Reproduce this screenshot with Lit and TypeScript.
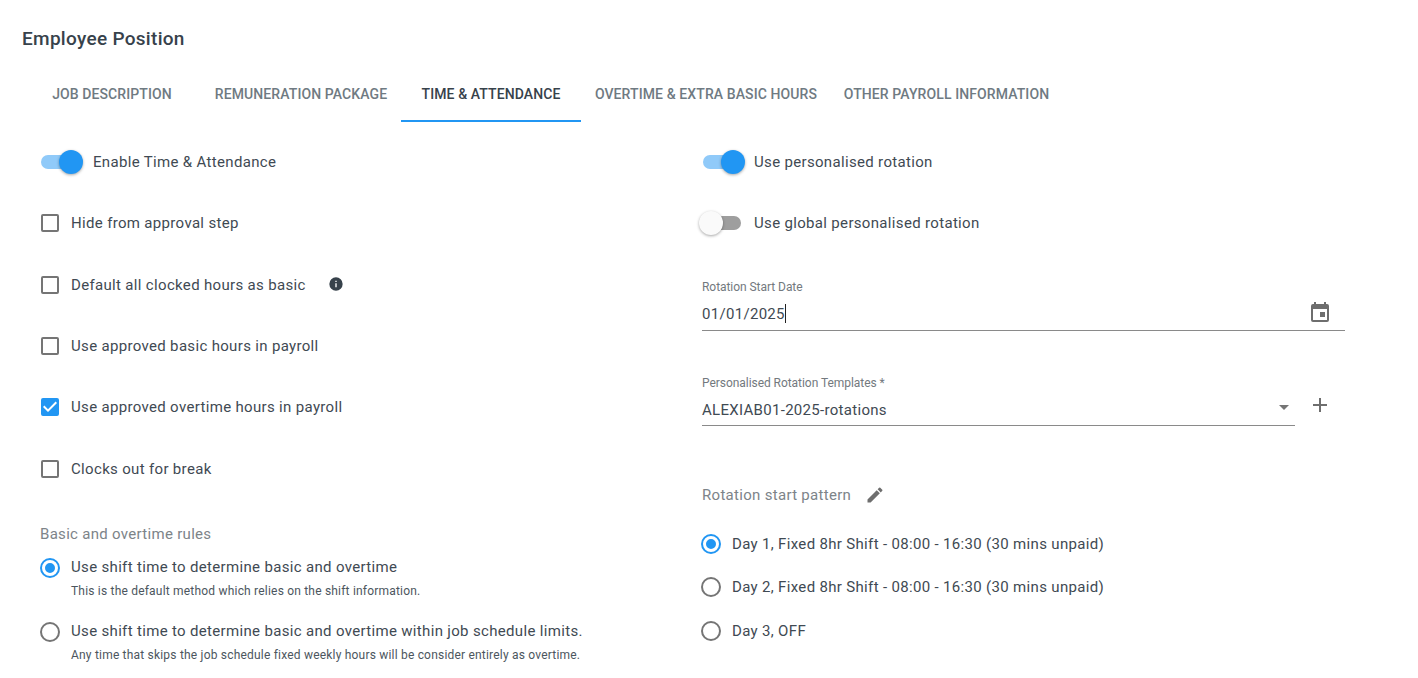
import { LitElement, html, css, svg } from "lit";
import { customElement } from "lit/decorators.js";

const icon = (d: string, cls: string) => html`<svg class=${cls} viewBox="0 0 24 24">${svg`<path d=${d}></path>`}</svg>`;
const CAL = "M19 4h-1V2h-2v2H8V2H6v2H5a2 2 0 0 0-2 2v14a2 2 0 0 0 2 2h14a2 2 0 0 0 2-2V6a2 2 0 0 0-2-2zm0 16H5V9h14v11zm-7-8h5v5h-5z";
const PLUS = "M19 13h-6v6h-2v-6H5v-2h6V5h2v6h6v2z";
const PEN = "M3 17.25V21h3.75L17.81 9.94l-3.75-3.75L3 17.25zM20.71 7.04a1 1 0 0 0 0-1.41l-2.34-2.34a1 1 0 0 0-1.41 0l-1.83 1.83 3.75 3.75 1.83-1.83z";
const INFO = "M12 2a10 10 0 1 0 0 20 10 10 0 0 0 0-20zm1 15h-2v-6h2v6zm0-8h-2V7h2v2z";
const CHECK = "M19 3H5a2 2 0 0 0-2 2v14a2 2 0 0 0 2 2h14a2 2 0 0 0 2-2V5a2 2 0 0 0-2-2zm-9 14l-5-5 1.41-1.41L10 14.17l7.59-7.59L19 8l-9 9z";
const BOX = "M19 5v14H5V5h14m0-2H5a2 2 0 0 0-2 2v14a2 2 0 0 0 2 2h14a2 2 0 0 0 2-2V5a2 2 0 0 0-2-2z";
const RADIO_ON = "M12 7a5 5 0 1 0 0 10 5 5 0 0 0 0-10zm0-5a10 10 0 1 0 0 20 10 10 0 0 0 0-20zm0 18a8 8 0 1 1 0-16 8 8 0 0 1 0 16z";
const RADIO_OFF = "M12 2a10 10 0 1 0 0 20 10 10 0 0 0 0-20zm0 18a8 8 0 1 1 0-16 8 8 0 0 1 0 16z";

@customElement("app-root")
export class AppRoot extends LitElement {
  static styles = css`
    :host { display: block; width: 1418px; height: 678px; overflow: hidden; background: #fff; font-family: Roboto, sans-serif; color: #3f4a53; }
    * { box-sizing: border-box; }
    h1 { margin: 0; padding: 28px 0 0 22px; height: 58px; font-size: 19px; line-height: 21px; font-weight: 500; color: #37424b; letter-spacing: 0.3px; }
    .tabs { display: flex; height: 64px; padding-left: 30px; }
    .tab { height: 64px; display: flex; align-items: center; justify-content: center; font-size: 14px; font-weight: 500; letter-spacing: 0.1px; color: #6f7a82; padding-top: 8px; white-space: nowrap; }
    .tab.active { color: #37424b; border-bottom: 2px solid #2196f3; padding-top: 10px; padding-bottom: 0; }
    .t1 { width: 164px; }
    .t2 { width: 200px; margin-left: 7px; }
    .t3 { width: 180px; }
    .t4 { width: 250px; }
    .t5 { width: 231px; }
    .columns { display: grid; grid-template-columns: 702px 643px; padding-top: 7.5px; }
    .left { padding-left: 40px; }
    .row { height: 61.4px; display: flex; align-items: center; font-size: 15px; letter-spacing: 0.33px; white-space: nowrap; }
    .row.first { height: 63px; padding-top: 1px; }
    svg.box { width: 24px; height: 24px; margin-right: 9px; margin-left: -2px; flex: none; fill: #757575; }
    svg.on { fill: #2196f3; }
    svg.info { width: 16px; height: 16px; fill: #37424b; margin-left: 22px; margin-top: -2px; }
    .switch { position: relative; width: 38px; height: 14px; border-radius: 7px; background: #90caf9; margin-right: 14px; flex: none; margin-left: 1px; }
    .knob { position: absolute; top: -5px; right: -4px; width: 24px; height: 24px; border-radius: 50%; background: #2196f3; box-shadow: 0 1px 3px rgba(0,0,0,.35); }
    .switch.off { background: #9e9e9e; }
    .switch.off .knob { right: auto; left: -4px; background: #fafafa; }
    .legend { font-size: 15px; letter-spacing: 0.3px; color: #7d8489; line-height: 18px; }
    .rules { padding-top: 25.5px; }
    .rules .legend { margin-bottom: 10px; }
    .radio { display: flex; align-items: flex-start; margin-top: 4px; }
    .radio svg { margin-top: 3px; }
    .radio-main { font-size: 15px; letter-spacing: 0.33px; line-height: 22px; white-space: nowrap; margin-top: 3px; }
    .hint { font-size: 12px; letter-spacing: 0.2px; line-height: 16px; margin-top: 5px; color: #4c565e; white-space: nowrap; }
    .gap { height: 14px; }
    .right .row svg.box { margin-left: 0; margin-right: 8px; }
    .right .switch { margin-left: 1px; margin-right: 13px; }
    .field { display: flex; align-items: flex-start; }
    .field-body { flex: 1; border-bottom: 1px solid #8a8a8a; position: relative; }
    .field-label { font-size: 12px; letter-spacing: -0.05px; line-height: 14px; color: #73797e; }
    .field-value { font-size: 15px; letter-spacing: 0.3px; line-height: 20px; padding-top: 9.5px; height: 36px; color: #3f4a53; }
    .date { padding-top: 26.5px; }
    .caret { display: inline-block; width: 1px; height: 19px; background: #222; vertical-align: -4px; }
    svg.cal { position: absolute; right: 13px; top: 20px; width: 24px; height: 24px; fill: #6e6e6e; }
    .select { padding-top: 45px; }
    .select .field-body { flex: none; width: 593px; }
    .select .field-value { height: 35px; }
    .arrow { position: absolute; right: 6px; top: 29px; width: 0; height: 0; border: 5px solid transparent; border-top-color: #757575; }
    svg.plus { width: 24px; height: 24px; fill: #6e6e6e; margin: 17px 0 0 13px; }
    .pattern { display: flex; align-items: center; padding-top: 54px; height: 84px; }
    svg.pen { width: 20px; height: 20px; fill: #6e6e6e; margin-left: 14px; }
    .opts { padding-top: 11.5px; }
    .opt { height: 43.5px; display: flex; align-items: center; font-size: 15px; letter-spacing: 0.33px; white-space: nowrap; }
    .opt svg.box { margin-left: -3px; margin-right: 9px; }
  `;

  private box(checked = false) {
    return icon(checked ? CHECK : BOX, checked ? "box on" : "box");
  }
  private radio(on = false) {
    return icon(on ? RADIO_ON : RADIO_OFF, on ? "box on" : "box");
  }
  private sw(on = true) {
    return html`<span class="switch ${on ? "" : "off"}"><span class="knob"></span></span>`;
  }

  render() {
    return html`
      <h1>Employee Position</h1>
      <nav class="tabs">
        <div class="tab t1">JOB DESCRIPTION</div>
        <div class="tab t2">REMUNERATION PACKAGE</div>
        <div class="tab t3 active">TIME &amp; ATTENDANCE</div>
        <div class="tab t4">OVERTIME &amp; EXTRA BASIC HOURS</div>
        <div class="tab t5">OTHER PAYROLL INFORMATION</div>
      </nav>
      <div class="columns">
        <section class="left">
          <div class="row first">${this.sw()}Enable Time &amp; Attendance</div>
          <div class="row">${this.box()}Hide from approval step</div>
          <div class="row">${this.box()}Default all clocked hours as basic${icon(INFO, "info")}</div>
          <div class="row">${this.box()}Use approved basic hours in payroll</div>
          <div class="row">${this.box(true)}Use approved overtime hours in payroll</div>
          <div class="row">${this.box()}Clocks out for break</div>
          <div class="rules">
            <div class="legend">Basic and overtime rules</div>
            <div class="radio">${this.radio(true)}<div>
              <div class="radio-main">Use shift time to determine basic and overtime</div>
              <div class="hint">This is the default method which relies on the shift information.</div>
            </div></div>
            <div class="gap"></div>
            <div class="radio">${this.radio()}<div>
              <div class="radio-main">Use shift time to determine basic and overtime within job schedule limits.</div>
              <div class="hint">Any time that skips the job schedule fixed weekly hours will be consider entirely as overtime.</div>
            </div></div>
          </div>
        </section>
        <section class="right">
          <div class="row first">${this.sw()}Use personalised rotation</div>
          <div class="row">${this.sw(false)}Use global personalised rotation</div>
          <div class="field date"><div class="field-body">
            <div class="field-label">Rotation Start Date</div>
            <div class="field-value">01/01/2025<span class="caret"></span></div>
            ${icon(CAL, "cal")}
          </div></div>
          <div class="field select">
            <div class="field-body">
              <div class="field-label">Personalised Rotation Templates *</div>
              <div class="field-value">ALEXIAB01-2025-rotations</div>
              <span class="arrow"></span>
            </div>
            ${icon(PLUS, "plus")}
          </div>
          <div class="pattern legend">Rotation start pattern${icon(PEN, "pen")}</div>
          <div class="opts">
            <div class="opt">${this.radio(true)}Day 1, Fixed 8hr Shift - 08:00 - 16:30 (30 mins unpaid)</div>
            <div class="opt">${this.radio()}Day 2, Fixed 8hr Shift - 08:00 - 16:30 (30 mins unpaid)</div>
            <div class="opt">${this.radio()}Day 3, OFF</div>
          </div>
        </section>
      </div>
    `;
  }
}
